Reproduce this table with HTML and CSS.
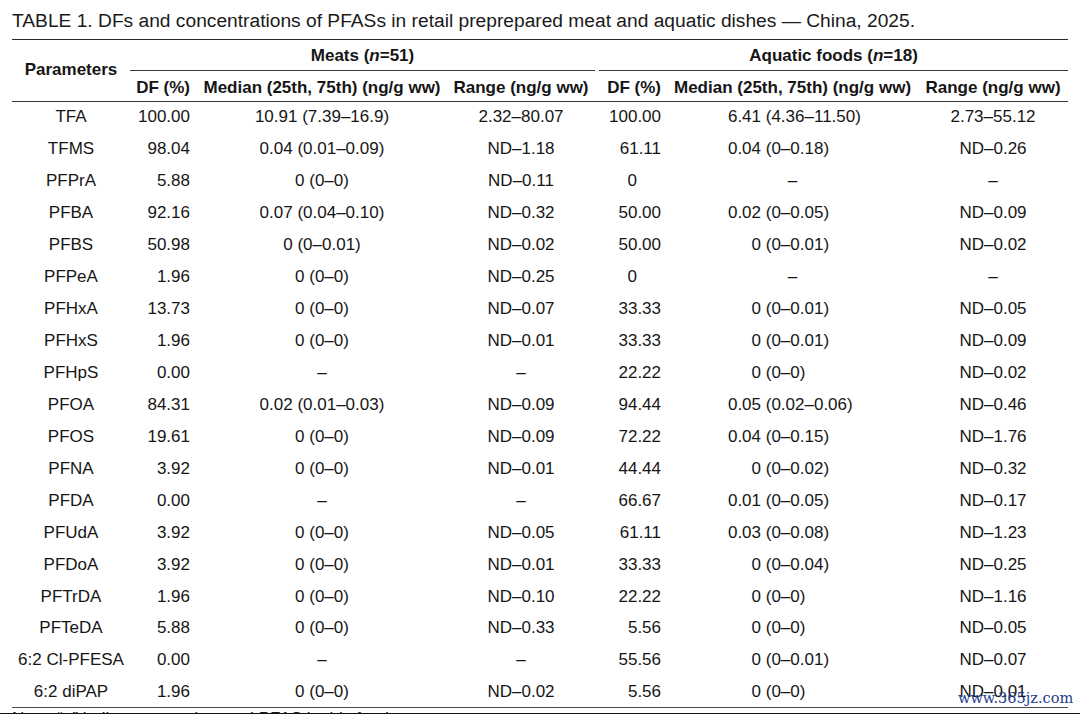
FILE: index.html
```html
<!DOCTYPE html>
<html lang="en">
<head>
<meta charset="utf-8">
<title>TABLE 1</title>
<link rel="stylesheet" href="styles.css">
</head>
<body>
<div class="page">
  <div class="title">TABLE 1. DFs and concentrations of PFASs in retail preprepared meat and aquatic dishes — China, 2025.</div>
  <table class="tbl">
    <colgroup>
      <col class="c1"><col class="c2"><col class="c3"><col class="c4"><col class="c5"><col class="c6"><col class="c7">
    </colgroup>
    <thead>
      <tr class="hg">
        <th class="param" rowspan="2">Parameters</th>
        <th class="grp" colspan="3"><div class="gl">Meats (<i>n</i>=51)</div></th>
        <th class="grp" colspan="3"><div class="gl aq">Aquatic foods (<i>n</i>=18)</div></th>
      </tr>
      <tr class="hs">
        <th class="df">DF (%)</th>
        <th>Median (25th, 75th) (ng/g ww)</th>
        <th>Range (ng/g ww)</th>
        <th class="df df2">DF (%)</th>
        <th>Median (25th, 75th) (ng/g ww)</th>
        <th>Range (ng/g ww)</th>
      </tr>
    </thead>
    <tbody>
      <tr><td>TFA</td><td class="df">100.00</td><td>10.91 (7.39–16.9)</td><td>2.32–80.07</td><td class="df df2">100.00</td><td class="am"><span class="n">6.41</span> (4.36–11.50)</td><td>2.73–55.12</td></tr>
      <tr><td>TFMS</td><td class="df">98.04</td><td>0.04 (0.01–0.09)</td><td>ND–1.18</td><td class="df df2">61.11</td><td class="am"><span class="n">0.04</span> (0–0.18)</td><td>ND–0.26</td></tr>
      <tr><td>PFPrA</td><td class="df">5.88</td><td>0 (0–0)</td><td>ND–0.11</td><td class="df df2 z">0</td><td class="dash">–</td><td>–</td></tr>
      <tr><td>PFBA</td><td class="df">92.16</td><td>0.07 (0.04–0.10)</td><td>ND–0.32</td><td class="df df2">50.00</td><td class="am"><span class="n">0.02</span> (0–0.05)</td><td>ND–0.09</td></tr>
      <tr><td>PFBS</td><td class="df">50.98</td><td>0 (0–0.01)</td><td>ND–0.02</td><td class="df df2">50.00</td><td class="am"><span class="n">0</span> (0–0.01)</td><td>ND–0.02</td></tr>
      <tr><td>PFPeA</td><td class="df">1.96</td><td>0 (0–0)</td><td>ND–0.25</td><td class="df df2 z">0</td><td class="dash">–</td><td>–</td></tr>
      <tr><td>PFHxA</td><td class="df">13.73</td><td>0 (0–0)</td><td>ND–0.07</td><td class="df df2">33.33</td><td class="am"><span class="n">0</span> (0–0.01)</td><td>ND–0.05</td></tr>
      <tr><td>PFHxS</td><td class="df">1.96</td><td>0 (0–0)</td><td>ND–0.01</td><td class="df df2">33.33</td><td class="am"><span class="n">0</span> (0–0.01)</td><td>ND–0.09</td></tr>
      <tr><td>PFHpS</td><td class="df">0.00</td><td>–</td><td>–</td><td class="df df2">22.22</td><td class="am"><span class="n">0</span> (0–0)</td><td>ND–0.02</td></tr>
      <tr><td>PFOA</td><td class="df">84.31</td><td>0.02 (0.01–0.03)</td><td>ND–0.09</td><td class="df df2">94.44</td><td class="am"><span class="n">0.05</span> (0.02–0.06)</td><td>ND–0.46</td></tr>
      <tr><td>PFOS</td><td class="df">19.61</td><td>0 (0–0)</td><td>ND–0.09</td><td class="df df2">72.22</td><td class="am"><span class="n">0.04</span> (0–0.15)</td><td>ND–1.76</td></tr>
      <tr><td>PFNA</td><td class="df">3.92</td><td>0 (0–0)</td><td>ND–0.01</td><td class="df df2">44.44</td><td class="am"><span class="n">0</span> (0–0.02)</td><td>ND–0.32</td></tr>
      <tr><td>PFDA</td><td class="df">0.00</td><td>–</td><td>–</td><td class="df df2">66.67</td><td class="am"><span class="n">0.01</span> (0–0.05)</td><td>ND–0.17</td></tr>
      <tr><td>PFUdA</td><td class="df">3.92</td><td>0 (0–0)</td><td>ND–0.05</td><td class="df df2">61.11</td><td class="am"><span class="n">0.03</span> (0–0.08)</td><td>ND–1.23</td></tr>
      <tr><td>PFDoA</td><td class="df">3.92</td><td>0 (0–0)</td><td>ND–0.01</td><td class="df df2">33.33</td><td class="am"><span class="n">0</span> (0–0.04)</td><td>ND–0.25</td></tr>
      <tr><td>PFTrDA</td><td class="df">1.96</td><td>0 (0–0)</td><td>ND–0.10</td><td class="df df2">22.22</td><td class="am"><span class="n">0</span> (0–0)</td><td>ND–1.16</td></tr>
      <tr><td>PFTeDA</td><td class="df">5.88</td><td>0 (0–0)</td><td>ND–0.33</td><td class="df df2">5.56</td><td class="am"><span class="n">0</span> (0–0)</td><td>ND–0.05</td></tr>
      <tr><td>6:2 Cl-PFESA</td><td class="df">0.00</td><td>–</td><td>–</td><td class="df df2">55.56</td><td class="am"><span class="n">0</span> (0–0.01)</td><td>ND–0.07</td></tr>
      <tr class="last"><td>6:2 diPAP</td><td class="df">1.96</td><td>0 (0–0)</td><td>ND–0.02</td><td class="df df2">5.56</td><td class="am"><span class="n">0</span> (0–0)</td><td>ND–0.01</td></tr>
    </tbody>
  </table>
  <div class="note">Note: “–” indicates non-detected PFAS in this food category.</div>
</div>
<div class="watermark">www.365jz.com</div>
</body>
</html>
```

FILE: styles.css
```css
html, body {
  margin: 0;
  padding: 0;
  background: #ffffff;
  overflow: hidden;
}

body {
  font-family: Arial, "Liberation Sans", Helvetica, sans-serif;
  color: #161616;
  width: 1080px;
  height: 714px;
}

.page {
  padding: 0 12px;
}

.title {
  padding-top: 9px;
  font-size: 19.2px;
  line-height: 23px;
  white-space: nowrap;
  color: #1a1a1a;
}

.tbl {
  margin-top: 7px;
  width: 1056px;
  table-layout: fixed;
  border-collapse: separate;
  border-spacing: 0;
  font-size: 17px;
  line-height: 20px;
}

.c1 { width: 118px; }
.c2 { width: 67px; }
.c3 { width: 250px; }
.c4 { width: 148px; }
.c5 { width: 72px; }
.c6 { width: 251px; }
.c7 { width: 150px; }

.tbl th {
  font-weight: bold;
  padding: 0;
  text-align: center;
  white-space: nowrap;
}

.tbl td {
  padding: 0;
  text-align: center;
  white-space: nowrap;
  vertical-align: middle;
}

.hg th {
  border-top: 1.5px solid #2a2a2a;
  vertical-align: bottom;
}

.hg th.param {
  border-bottom: 1.5px solid #3a3a3a;
  vertical-align: middle;
}

.gl {
  height: 28px;
  padding-top: 2px;
  line-height: 28px;
  border-bottom: 1px solid #3a3a3a;
}

.gl.aq {
  margin-left: 4px;
}

.hs {
  height: 30.5px;
}

.hs th {
  padding-top: 5px;
  border-bottom: 1.5px solid #3a3a3a;
  vertical-align: middle;
}

.tbl th.df,
.tbl td.df {
  text-align: right;
  padding-right: 7px;
}

.tbl th.df2,
.tbl td.df2 {
  padding-right: 6px;
}

.tbl td.z {
  padding-right: 30px;
}

.tbl td.am {
  text-align: left;
  padding-left: 60px;
}

.am .n {
  display: inline-block;
  width: 34px;
  text-align: right;
}

.tbl td.dash {
  padding-left: 0;
  padding-right: 0;
  text-align: center;
}

.tbl tbody tr {
  height: 31.95px;
}

.tbl tr.last td {
  border-bottom: 1.5px solid #4a4a4a;
}

.note {
  margin: 2px -12px 0;
  padding-left: 12px;
  font-size: 17px;
  line-height: 17px;
  height: 2.5px;
  white-space: nowrap;
  border-bottom: 2px solid #111;
}

.watermark {
  position: absolute;
  left: 958px;
  top: 688px;
  font-family: "DejaVu Serif", "Liberation Serif", serif;
  font-size: 14.5px;
  line-height: 20px;
  color: #1c3c8c;
  white-space: nowrap;
}
```
